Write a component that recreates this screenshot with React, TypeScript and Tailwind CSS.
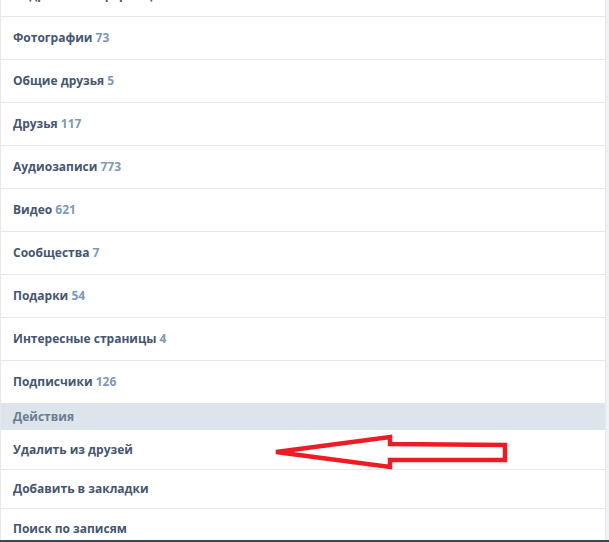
const items = [
  { title: 'Фотографии', count: '73' },
  { title: 'Общие друзья', count: '5' },
  { title: 'Друзья', count: '117' },
  { title: 'Аудиозаписи', count: '773' },
  { title: 'Видео', count: '621' },
  { title: 'Сообщества', count: '7' },
  { title: 'Подарки', count: '54' },
  { title: 'Интересные страницы', count: '4' },
]

const actions = [
  { title: 'Удалить из друзей', h: 'h-[40px] border-b' },
  { title: 'Добавить в закладки', h: 'h-[39px] border-b' },
  { title: 'Поиск по записям', h: 'h-[39px]' },
]

export default function App() {
  return (
    <div
      className="relative h-[542px] w-[609px] overflow-hidden bg-[#f0f2f5]"
      style={{ fontFamily: '"Open Sans", "Noto Sans", sans-serif' }}
    >
      <div className="flex h-[540px] w-[606px] flex-col overflow-hidden border-x border-[#e7e8ec] bg-white text-[12px] font-bold text-[#45566d]">
        {/* partially scrolled-off row */}
        <div className="-mt-[26px] flex h-[43px] shrink-0 items-center border-b border-[#e7e8ec] px-[12px]">
          <span>
            Подробная информация <span className="text-[#7f98b6]">2</span>
          </span>
        </div>
        {items.map((it) => (
          <div
            key={it.title}
            className="flex h-[43px] shrink-0 items-center border-b border-[#e7e8ec] px-[12px]"
          >
            <span>
              {it.title} <span className="text-[#7f98b6]">{it.count}</span>
            </span>
          </div>
        ))}
        <div className="flex h-[42px] shrink-0 items-center px-[12px]">
          <span>
            Подписчики <span className="text-[#7f98b6]">126</span>
          </span>
        </div>
        <div className="flex h-[27px] shrink-0 items-center bg-[#dee4eb] px-[12px] text-[#6a7d94]">
          Действия
        </div>
        {actions.map((a) => (
          <div
            key={a.title}
            className={`flex shrink-0 items-center border-[#e7e8ec] px-[12px] ${a.h}`}
          >
            {a.title}
          </div>
        ))}
      </div>
      <div className="h-[2px] w-full bg-[#2f4a5a]" />

      {/* red annotation arrow */}
      <svg
        className="pointer-events-none absolute left-0 top-0"
        width="609"
        height="542"
        viewBox="0 0 609 542"
      >
        <polygon
          points="276,452 390,437 390,444 505,445 505,460 390,460 390,467"
          fill="none"
          stroke="#ed1c24"
          strokeWidth="4.5"
          strokeLinejoin="miter"
        />
      </svg>
    </div>
  )
}
